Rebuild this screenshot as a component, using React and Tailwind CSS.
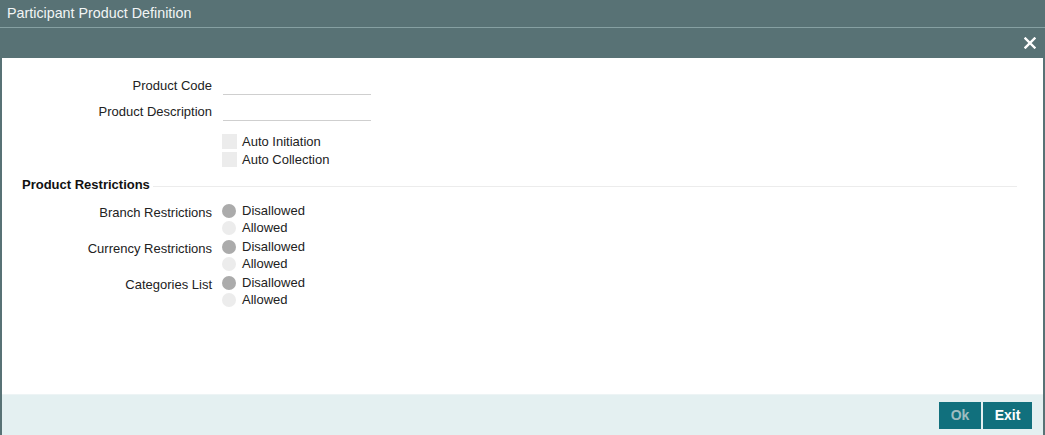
import React from "react";

const restrictions = ["Branch Restrictions", "Currency Restrictions", "Categories List"];

export default function App() {
  return (
    <div
      className="w-[1045px] h-[435px] bg-[#587275] flex flex-col px-[2px] text-[13px] text-[#222]"
      style={{ fontFamily: '"Liberation Sans", Arial, sans-serif' }}
    >
      {/* title bar */}
      <div className="h-[28px] -mx-[2px] flex items-center px-[7px] text-[14.3px] text-[#f2f5f5] border-b border-[#86a0a2]">
        Participant Product Definition
      </div>
      <div className="h-[30px] -mx-[2px] flex items-center justify-end pr-[9px]">
        <svg width="12" height="12" viewBox="0 0 12 12">
          <path d="M1.5 1.5 L10.5 10.5 M10.5 1.5 L1.5 10.5" stroke="#fff" strokeWidth="2.4" strokeLinecap="square" />
        </svg>
      </div>

      {/* body */}
      <div className="flex-1 bg-white flex flex-col">
        <div className="pt-[16px]">
          <FieldRow label="Product Code">
            <div className="w-[148px] h-[20px] border-b border-[#cfcfcf] mt-[1px]" />
          </FieldRow>
          <div className="h-[4px]" />
          <FieldRow label="Product Description">
            <div className="w-[148px] h-[20px] border-b border-[#cfcfcf] mt-[1px]" />
          </FieldRow>

          <div className="mt-[13px] ml-[220px] flex flex-col gap-[3px]">
            <Check label="Auto Initiation" />
            <Check label="Auto Collection" />
          </div>
        </div>

        <div className="mt-[8px] ml-[20px] mr-[26px] flex items-center gap-[3px]">
          <span className="font-bold text-[#111]">Product Restrictions</span>
          <div className="flex-1 h-px bg-[#ececec] mt-[3px]" />
        </div>

        <div className="mt-[8px] flex flex-col gap-[2px]">
          {restrictions.map((r) => (
            <div key={r} className="flex">
              <div className="w-[212px] text-right pr-[2px] pt-[1px] leading-[17px]">{r}</div>
              <div className="ml-[8px] flex flex-col">
                <Radio label="Disallowed" on />
                <Radio label="Allowed" />
              </div>
            </div>
          ))}
        </div>
      </div>

      {/* footer */}
      <div className="h-[41px] bg-[#e4f0f1] border-t border-[#edf4f5] flex items-start justify-end pt-[7px] pr-[11px] gap-[2px]">
        <button className="w-[42px] h-[27px] bg-[#11707d] text-[#9fbcc0] font-bold text-[14px]">Ok</button>
        <button className="w-[49px] h-[27px] bg-[#11707d] text-white font-bold text-[14px]">Exit</button>
      </div>
    </div>
  );
}

function FieldRow({ label, children }) {
  return (
    <div className="flex items-start">
      <div className="w-[212px] text-right pr-[2px] pt-[2px]">{label}</div>
      <div className="ml-[9px]">{children}</div>
    </div>
  );
}

function Check({ label }) {
  return (
    <div className="flex items-center gap-[5px] h-[15px]">
      <div className="w-[15px] h-[15px] bg-[#ececec]" />
      <span>{label}</span>
    </div>
  );
}

function Radio({ label, on }) {
  return (
    <div className="flex items-center gap-[6px] h-[17px]">
      <div className={`w-[14px] h-[14px] rounded-full ${on ? "bg-[#ababab]" : "bg-[#ececec]"}`} />
      <span>{label}</span>
    </div>
  );
}
